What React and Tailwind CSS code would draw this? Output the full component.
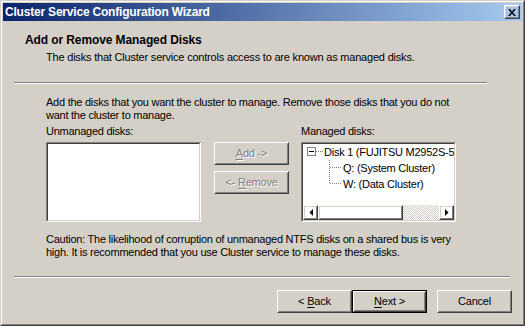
import React from "react";

const font = { fontFamily: '"Liberation Sans", Arial, sans-serif' };

function Raised({ className = "", children }) {
  return (
    <div
      className={
        "border border-white border-r-[#404040] border-b-[#404040] " + className
      }
    >
      <div className="w-full h-full border border-[#d4d0c8] border-r-[#808080] border-b-[#808080] flex items-center justify-center">
        {children}
      </div>
    </div>
  );
}

function Sunken({ className = "", children }) {
  return (
    <div
      className={
        "border border-[#808080] border-r-white border-b-white " + className
      }
    >
      <div className="w-full h-full border border-[#404040] border-r-[#d4d0c8] border-b-[#d4d0c8] bg-white overflow-hidden">
        {children}
      </div>
    </div>
  );
}

function Separator({ className = "" }) {
  return (
    <div className={"h-[2px] border-t border-t-[#808080] border-b border-b-white " + className} />
  );
}

function Button({ children, disabled, isDefault }) {
  const inner = (
    <Raised className="w-full h-full">
      <span
        className={
          "text-[11px] leading-none tracking-[-0.2px] " +
          (disabled ? "text-[#808080] [text-shadow:1px_1px_0_#ffffff]" : "text-black")
        }
      >
        {children}
      </span>
    </Raised>
  );
  if (isDefault) {
    return <div className="w-[75px] h-[23px] border border-black">{inner}</div>;
  }
  return <div className="w-[75px] h-[23px]">{inner}</div>;
}

function U({ children }) {
  return <span className="underline underline-offset-[2px]">{children}</span>;
}

function TreeRow({ level, last, children }) {
  if (level === 0) {
    return (
      <div className="h-[16px] flex items-center">
        <svg width="17" height="16" className="shrink-0">
          <rect x="0.5" y="3.5" width="8" height="8" fill="#fff" stroke="#808080" />
          <line x1="2" y1="7.5" x2="7" y2="7.5" stroke="#000" />
          <line x1="9" y1="7.5" x2="16" y2="7.5" stroke="#808080" strokeDasharray="1 1" />
        </svg>
        <span className="whitespace-nowrap">{children}</span>
      </div>
    );
  }
  return (
    <div className="h-[16px] flex items-center">
      <svg width="36" height="16" className="shrink-0">
        <line x1="22.5" y1="0" x2="22.5" y2={last ? 8 : 16} stroke="#808080" strokeDasharray="1 1" />
        <line x1="23" y1="7.5" x2="35" y2="7.5" stroke="#808080" strokeDasharray="1 1" />
      </svg>
      <span className="whitespace-nowrap">{children}</span>
    </div>
  );
}

function Arrow({ dir }) {
  return (
    <Raised className="w-[15px] h-[15px] shrink-0">
      <svg width="4" height="7">
        {dir === "left" ? (
          <polygon points="4,0 4,7 0.5,3.5" fill="#000" />
        ) : (
          <polygon points="0,0 0,7 3.5,3.5" fill="#000" />
        )}
      </svg>
    </Raised>
  );
}

export default function App() {
  return (
    <div style={font} className="w-[525px] h-[326px] bg-[#d4d0c8] text-black">
      <div className="w-full h-full border border-[#d4d0c8] border-r-[#404040] border-b-[#404040]">
        <div className="w-full h-full border border-white border-r-[#808080] border-b-[#808080] p-px flex flex-col">
          {/* title bar */}
          <div className="h-[18px] flex items-center justify-between bg-[linear-gradient(to_right,#0a246a,#a6caf0)] pl-[2px] pr-[2px]">
            <span className="text-white font-bold text-[12px] tracking-[-0.2px] leading-[18px]">
              Cluster Service Configuration Wizard
            </span>
            <Raised className="w-[16px] h-[14px]">
              <svg width="8" height="7">
                <path d="M0 0h2l2 2.5L6 0h2L5 3.5 8 7H6L4 4.5 2 7H0l3-3.5z" fill="#000" />
              </svg>
            </Raised>
          </div>

          {/* header */}
          <div className="mt-[12px] ml-[22px] font-bold text-[12px] leading-[14px] tracking-[-0.1px]">
            Add or Remove Managed Disks
          </div>
          <div className="mt-[4px] ml-[43px] text-[11px] leading-[13px] tracking-[-0.2px]">
            The disks that Cluster service controls access to are known as managed disks.
          </div>
          <Separator className="mt-[18px] ml-[11px] w-[473px]" />

          {/* body */}
          <div className="mt-[12px] ml-[43px] text-[11px] leading-[13px] tracking-[-0.25px]">
            <p>
              Add the disks that you want the cluster to manage. Remove those disks that you do not
              <br />
              want the cluster to manage.
            </p>
            <div className="mt-[3px] flex">
              <div className="w-[155px]">
                <div>Unmanaged disks:</div>
                <Sunken className="mt-[4px] w-[155px] h-[80px]" />
              </div>
              <div className="ml-[13px] pt-[17px] flex flex-col gap-[6px]">
                <Button disabled>
                  <U>A</U>dd -&gt;
                </Button>
                <Button disabled>
                  &lt;- <U>R</U>emove
                </Button>
              </div>
              <div className="ml-[12px] w-[155px]">
                <div>Managed disks:</div>
                <Sunken className="mt-[4px] w-[155px] h-[80px]">
                  <div className="h-full flex flex-col">
                    <div className="flex-1 pl-[4px] overflow-hidden">
                      <TreeRow level={0}>Disk 1 (FUJITSU M2952S-512)</TreeRow>
                      <TreeRow level={1}>Q: (System Cluster)</TreeRow>
                      <TreeRow level={1} last>
                        W: (Data Cluster)
                      </TreeRow>
                    </div>
                    <div className="h-[15px] flex">
                      <Arrow dir="left" />
                      <Raised className="w-[85px] h-[15px]" />
                      <div className="flex-1 bg-[repeating-conic-gradient(#ffffff_0_25%,#d4d0c8_0_50%)] bg-[length:2px_2px]" />
                      <Arrow dir="right" />
                    </div>
                  </div>
                </Sunken>
              </div>
            </div>
            <p className="mt-[11px]">
              Caution: The likelihood of corruption of unmanaged NTFS disks on a shared bus is very
              <br />
              high. It is recommended that you use Cluster service to manage these disks.
            </p>
          </div>

          <Separator className="mt-[17px] ml-[11px] w-[496px]" />

          {/* buttons */}
          <div className="mt-[12px] flex justify-end pr-[10px]">
            <Button>
              &lt; <U>B</U>ack
            </Button>
            <Button isDefault>
              <U>N</U>ext &gt;
            </Button>
            <div className="ml-[10px]">
              <Button>Cancel</Button>
            </div>
          </div>
        </div>
      </div>
    </div>
  );
}
